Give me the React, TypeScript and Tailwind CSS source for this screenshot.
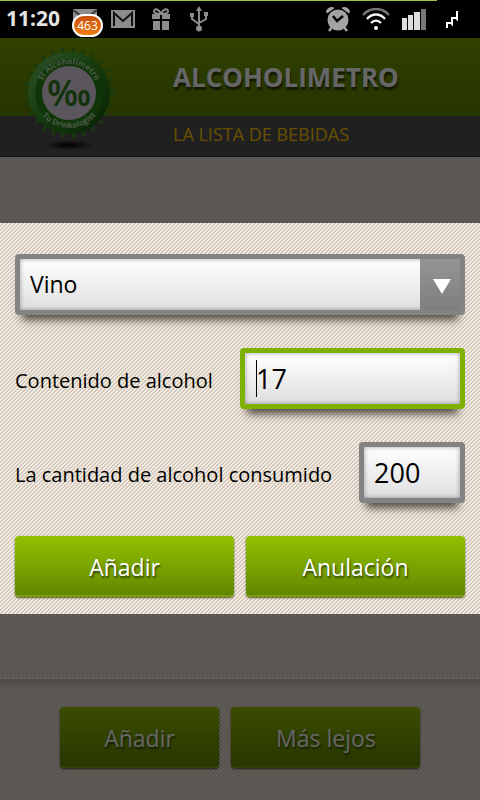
import { useState } from "react";

const stripes =
  "bg-[#e7ddd1] bg-[linear-gradient(135deg,#f4ede4_25%,#d3c8bb_25%,#d3c8bb_50%,#f4ede4_50%,#f4ede4_75%,#d3c8bb_75%)] bg-size-[4px_4px]";

const boxShadow = "shadow-[0_12px_8px_-7px_rgba(60,50,40,0.85)]";

const fieldFill =
  "bg-linear-to-b from-white to-[#dfdfdf] inset-shadow-[0_0_5px_rgba(0,0,0,0.35)]";

const greenButton =
  "h-[61px] pt-1 rounded-[4px] bg-linear-to-b from-[#93c100] to-[#638800] text-white text-[23px] text-shadow-[1px_2px_2px_rgba(0,0,0,0.6)] shadow-[0_1px_2px_rgba(40,50,0,0.8)] border-b-2 border-[#7a9c10]";

const StatusBar = () => (
  <div className="relative h-[38px] bg-black flex items-center justify-between pl-[6px] pr-5">
    <div className="absolute left-0 top-0 h-px w-[91%] bg-[#9cc24a]" />
    <div className="flex items-center">
      <span className="w-[66px] text-[21px] font-bold text-[#e4e4e4]">11:20</span>
      <div className="relative w-[38px] h-[38px]">
        <svg className="absolute left-0 top-[9px]" width="26" height="20" viewBox="0 0 26 20">
          <rect x="1" width="24" height="18" fill="#8c8c8c" />
          <path d="M1 1l12 9 12-9" fill="none" stroke="#333" strokeWidth="2" />
        </svg>
        <span className="absolute left-0 top-[14px] w-[31px] h-[23px] rounded-full border-2 border-white bg-linear-to-b from-[#c8500c] to-[#f07c10] text-white text-xs leading-5 text-center">
          463
        </span>
      </div>
      <svg width="26" height="20" viewBox="0 0 26 20">
        <rect x="1" y="1" width="24" height="18" fill="#8c8c8c" />
        <path d="M4 17V4l9 8 9-8v13" fill="none" stroke="#111" strokeWidth="2" />
      </svg>
      <svg className="ml-[15px]" width="20" height="22" viewBox="0 0 20 22" fill="#8c8c8c">
        <path d="M1 6h8v5H1zM11 6h8v5h-8zM2 13h7v9H2zM11 13h7v9h-7z" />
        <path d="M10 6C8 1 4 0 3 3c-.4 2 2 3 7 3zm0 0c2-5 6-6 7-3 .4 2-2 3-7 3z" fill="none" stroke="#8c8c8c" strokeWidth="2" />
      </svg>
      <svg className="ml-[19px]" width="18" height="26" viewBox="0 0 18 26" fill="#8c8c8c">
        <path d="M9 0l3 5H6zM0 7h4v4H0zM14 6h4v4h-4z" />
        <circle cx="9" cy="22.500" r="3" />
        <path d="M9 4v18M2 10v3l7 5M16 9v4l-7 4" fill="none" stroke="#8c8c8c" strokeWidth="2" />
      </svg>
    </div>
    <div className="flex items-center">
      <svg width="24" height="26" viewBox="0 0 24 26" fill="#a3a3a3">
        <path d="M1 7a5 4 0 0 1 7-5zM23 7a5 4 0 0 0-7-5z" stroke="#a3a3a3" strokeWidth="1" />
        <path d="M6 21l-3 4M18 21l3 4" stroke="#a3a3a3" strokeWidth="2.500" />
        <circle cx="12" cy="14" r="10.500" />
        <path d="M7 10l4 5 6-5" fill="none" stroke="#000" strokeWidth="2.500" />
      </svg>
      <svg className="ml-3" width="28" height="24" viewBox="0 0 28 24" fill="none" strokeWidth="2.300">
        <path d="M1 8c7-8 19-8 26 0" stroke="#777" />
        <path d="M5 12c5-6 13-6 18 0M9 16c3-3 7-3 10 0" stroke="#f4f4f4" />
        <circle cx="14" cy="21" r="2" fill="#fff" />
      </svg>
      <svg className="ml-3" width="24" height="22" viewBox="0 0 24 22" fill="#dedede">
        <path d="M0 10h5v12H0zM6 7h5v15H6zM12 4h6v18h-6z" />
        <path d="M19 1h5v21h-5z" fill="#777" />
      </svg>
      <svg className="ml-[19px]" width="15" height="18" viewBox="0 0 15 18">
        <path d="M2 18v-5h4l1 1V8h4l1 1V1" fill="none" stroke="#fff" strokeWidth="2" />
      </svg>
    </div>
  </div>
);

const Logo = () => (
  <svg className="absolute left-[22px] top-[6px]" width="96" height="106" viewBox="0 0 96 106">
    <defs>
      <linearGradient id="cap" x1="0" y1="0" x2="1" y2="1">
        <stop offset="0" stopColor="#7ccc6c" />
        <stop offset="0.45" stopColor="#379a26" />
        <stop offset="1" stopColor="#14500a" />
      </linearGradient>
      <radialGradient id="shade">
        <stop offset="0" stopColor="#000" />
        <stop offset="1" stopColor="#000" stopOpacity="0" />
      </radialGradient>
      <path id="arcTop" d="M18 49a29 29 0 0 1 58 0" />
      <path id="arcBottom" d="M12 49a35 35 0 0 0 70 0" />
    </defs>
    <ellipse cx="47" cy="101" rx="26" ry="5" fill="url(#shade)" />
    <circle cx="47" cy="49" r="42" fill="none" stroke="#3f9228" strokeWidth="7" strokeDasharray="2.500 7.500" />
    <circle cx="47" cy="49" r="41" fill="url(#cap)" />
    <circle cx="47" cy="49" r="34" fill="#2a8516" />
    <circle cx="47" cy="49" r="27" fill="#e4d8e4" />
    <text fontSize="8" fontWeight="700" fill="#b9dfb0">
      <textPath href="#arcTop" startOffset="50%" textAnchor="middle">El Alcoholimetro</textPath>
    </text>
    <text fontSize="8" fontWeight="700" fill="#b9dfb0">
      <textPath href="#arcBottom" startOffset="50%" textAnchor="middle">Tu Drinkologist</textPath>
    </text>
    <text x="47" y="62" fontSize="36" fontWeight="600" fill="#2f8020" textAnchor="middle">‰</text>
  </svg>
);

const Dialog = () => {
  const [drink, setDrink] = useState("Vino");
  const [content, setContent] = useState("17");
  const [amount, setAmount] = useState("200");

  return (
    <div className="absolute inset-0 bg-black/60 flex items-center">
      <form
        role="dialog"
        aria-label="Bebida"
        className={`w-full mb-px px-[15px] pt-[31px] pb-[17px] flex flex-col gap-[33px] text-black ${stripes}`}
      >
        <div className={`relative h-[61px] rounded-[4px] border-[5px] border-[#838383] ${boxShadow}`}>
          <select
            aria-label="Bebida"
            value={drink}
            onChange={(e) => setDrink(e.target.value)}
            className={`w-full h-full appearance-none pl-[10px] text-[23px] outline-none ${fieldFill}`}
          >
            <option>Vino</option>
            <option>Cerveza</option>
            <option>Vodka</option>
          </select>
          <div className="pointer-events-none absolute inset-y-0 right-0 w-10 pl-1 pt-1 bg-linear-to-b from-[#949494] to-[#7f7f7f] flex items-center justify-center">
            <svg width="18" height="15" viewBox="0 0 18 15" fill="#fff">
              <path d="M0 0h18L9 15z" />
            </svg>
          </div>
        </div>

        <div className="flex items-center justify-between">
          <label htmlFor="content" className="text-xl pt-[5px]">
            Contenido de alcohol
          </label>
          <div className={`relative w-1/2 h-[61px] rounded-[4px] border-[5px] border-[#7db000] ${boxShadow}`}>
            <input
              id="content"
              value={content}
              onChange={(e) => setContent(e.target.value)}
              className={`w-full h-full pl-[11px] text-[27px] outline-none ${fieldFill}`}
            />
            <span className="absolute left-[11px] top-[7px] h-[37px] w-px bg-black" />
          </div>
        </div>

        <div className="flex items-center justify-between">
          <label htmlFor="amount" className="text-xl pt-[5px]">
            La cantidad de alcohol consumido
          </label>
          <div className={`w-[106px] h-[61px] rounded-[4px] border-[5px] border-[#838383] ${boxShadow}`}>
            <input
              id="amount"
              value={amount}
              onChange={(e) => setAmount(e.target.value)}
              className={`w-full h-full pl-[10px] text-[27px] outline-none ${fieldFill}`}
            />
          </div>
        </div>

        <div className="grid grid-cols-2 gap-3">
          <button type="button" className={greenButton}>Añadir</button>
          <button type="button" className={greenButton}>Anulación</button>
        </div>
      </form>
    </div>
  );
};

const App = () => {
  return (
    <div className="min-h-screen flex flex-col font-['Open_Sans',sans-serif]">
      <StatusBar />
      <div className="relative flex-1 flex flex-col">
        <header className="relative">
          <div className="h-[78px] pl-[173px] flex items-center bg-[linear-gradient(to_bottom,transparent,#5f8300),linear-gradient(135deg,#86b000_25%,#6c9400_25%,#6c9400_50%,#86b000_50%,#86b000_75%,#6c9400_75%)] bg-size-[100%_100%,4px_4px]">
            <h1 className="text-[26px] font-bold text-white text-shadow-[1px_3px_2px_rgba(0,0,0,0.6)]">
              ALCOHOLIMETRO
            </h1>
          </div>
          <div className="h-[41px] pl-[173px] pb-1 flex items-center bg-[#525252] border-b border-[#333]">
            <h2 className="text-lg text-[#ffc800]">LA LISTA DE BEBIDAS</h2>
          </div>
          <Logo />
        </header>
        <main className={`flex-1 ${stripes}`} />
        <footer className={`h-[122px] pt-7 flex justify-center gap-3 border-t border-[#fffaf2] inset-shadow-[0_16px_8px_-12px_rgba(0,0,0,0.2)] ${stripes}`}>
          <button type="button" className={`w-1/3 ${greenButton}`}>Añadir</button>
          <button type="button" className={`w-[189px] ${greenButton}`}>Más lejos</button>
        </footer>
        <Dialog />
      </div>
    </div>
  );
};

export default App;
